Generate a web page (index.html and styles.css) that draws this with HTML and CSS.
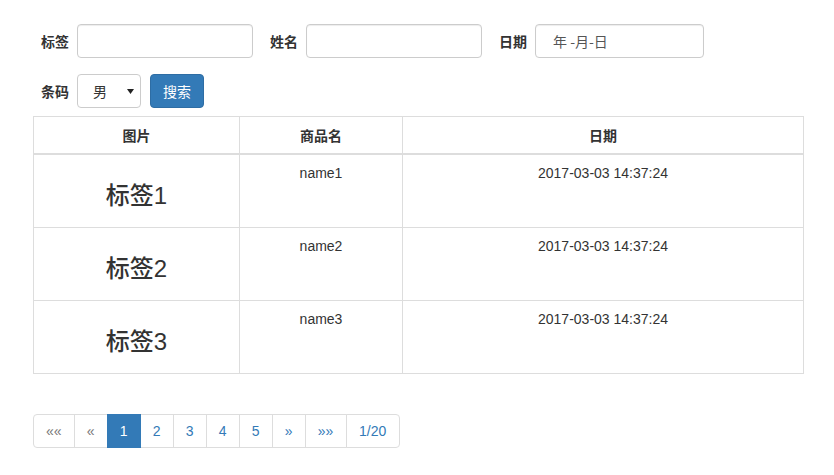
FILE: index.html
```html
<!DOCTYPE html>
<html lang="zh">
<head>
<meta charset="utf-8">
<link rel="stylesheet" href="styles.css">
</head>
<body>
<div class="page">
  <form class="search">
    <div class="row">
      <label class="field"><span class="lbl">标签</span><input class="ctl w-text" type="text"></label>
      <label class="field"><span class="lbl">姓名</span><input class="ctl w-text" type="text"></label>
      <label class="field"><span class="lbl">日期</span><input class="ctl w-date" type="text" value="年 -月-日" readonly></label>
    </div>
    <div class="row row2">
      <label class="field"><span class="lbl">条码</span>
        <span class="ctl select"><span class="sel-val">男</span><svg class="caret" width="7" height="5" viewBox="0 0 7 5"><path d="M0 0h7L3.5 5z" fill="#222"/></svg></span>
      </label>
      <button class="btn" type="button">搜索</button>
    </div>
  </form>

  <table class="grid">
    <colgroup><col class="c1"><col class="c2"><col class="c3"></colgroup>
    <thead>
      <tr><th>图片</th><th>商品名</th><th>日期</th></tr>
    </thead>
    <tbody>
      <tr><td><h3 class="tag">标签1</h3></td><td>name1</td><td>2017-03-03 14:37:24</td></tr>
      <tr><td><h3 class="tag">标签2</h3></td><td>name2</td><td>2017-03-03 14:37:24</td></tr>
      <tr><td><h3 class="tag">标签3</h3></td><td>name3</td><td>2017-03-03 14:37:24</td></tr>
    </tbody>
  </table>

  <nav class="pager">
    <a class="pg first wide disabled">««</a>
    <a class="pg disabled">«</a>
    <a class="pg active">1</a>
    <a class="pg">2</a>
    <a class="pg">3</a>
    <a class="pg">4</a>
    <a class="pg">5</a>
    <a class="pg">»</a>
    <a class="pg wide">»»</a>
    <a class="pg last">1/20</a>
  </nav>
</div>
</body>
</html>
```
FILE: styles.css
```css
* { box-sizing: border-box; }
html, body {
  margin: 0;
  background: #fff;
}
body {
  font-family: "Liberation Sans", Arial, "Noto Sans CJK SC", sans-serif;
  font-size: 14px;
  line-height: 20px;
  color: #333;
}
.page {
  padding: 24px 31px 0 33px;
}
.search {
  padding-left: 8px;
}
.row {
  display: flex;
  align-items: center;
  height: 34px;
}
.row2 {
  margin-top: 16px;
}
.field {
  display: flex;
  align-items: center;
  margin-right: 16px;
}
.field + .field { margin-left: 1px; }
.lbl {
  font-weight: bold;
  width: 28px;
  margin-right: 8px;
  color: #333;
  font-family: "Noto Sans CJK SC", sans-serif;
}
.ctl {
  height: 34px;
  border: 1px solid #ccc;
  border-radius: 4px;
  padding: 6px 12px;
  font: inherit;
  color: #555;
  background: #fff;
  box-shadow: inset 0 1px 1px rgba(0,0,0,0.075);
  outline: none;
}
.w-text { width: 176px; }
.w-date { width: 169px; padding-left: 17px; font-family: "Noto Sans CJK SC", sans-serif; font-size: 14px; }
.select {
  width: 64px;
  display: flex;
  align-items: center;
  justify-content: space-between;
  padding: 6px 6px 6px 15px;
  font-family: "Noto Sans CJK SC", sans-serif;
  color: #333;
  box-shadow: none;
}
.caret { display: block; }
.btn {
  margin-left: -7px;
  height: 34px;
  width: 54px;
  border: 1px solid #2e6da4;
  border-radius: 4px;
  background: #337ab7;
  color: #fff;
  font-family: "Noto Sans CJK SC", sans-serif;
  font-size: 14px;
  padding: 0;
}
.grid {
  margin-top: 8px;
  width: 770px;
  border-collapse: collapse;
  border-spacing: 0;
  table-layout: fixed;
}
.c1 { width: 206px; }
.c2 { width: 163px; }
.c3 { width: 401px; }
.grid th, .grid td {
  border: 1px solid #ddd;
  padding: 8px;
  text-align: center;
  vertical-align: top;
  line-height: 20px;
}
.grid th {
  border-bottom: 2px solid #ddd;
  font-weight: bold;
  font-family: "Noto Sans CJK SC", sans-serif;
  color: #333;
}
.grid td { color: #333; }
.tag {
  margin: 20px 0 10px;
  font-size: 24px;
  font-weight: 500;
  line-height: 26px;
  font-family: "Liberation Sans", Arial, "Noto Sans CJK SC", sans-serif;
  color: #333;
}
.pager {
  display: flex;
  margin-top: 40px;
}
.pg {
  display: block;
  min-width: 34px;
  text-align: center;
  padding: 6px 12px;
  line-height: 20px;
  border: 1px solid #ddd;
  margin-left: -1px;
  color: #337ab7;
  background: #fff;
  text-decoration: none;
}
.pg.wide { min-width: 42px; }
.pg.first { margin-left: 0; min-width: 41px; border-radius: 4px 0 0 4px; }
.pg.last { min-width: 54px; border-radius: 0 4px 4px 0; }
.pg.disabled { color: #777; }
.pg.active {
  background: #337ab7;
  border-color: #337ab7;
  color: #fff;
  position: relative;
}
```
